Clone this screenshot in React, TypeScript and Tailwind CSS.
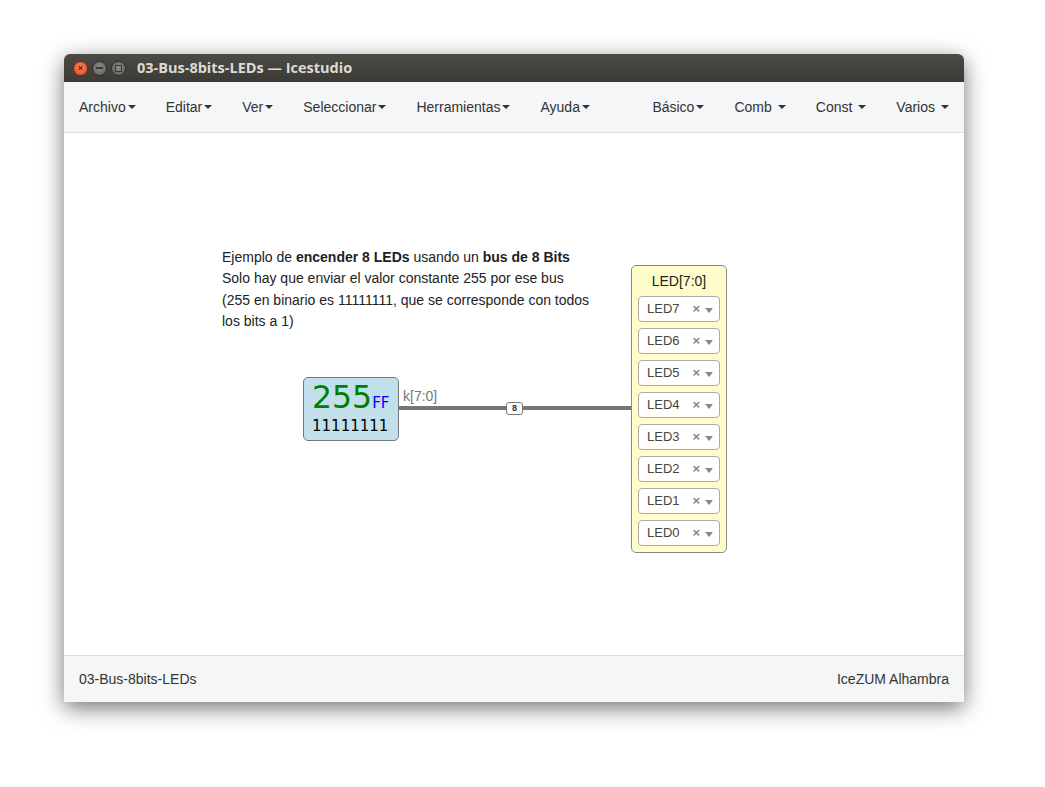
import React from "react";

const menuIzq = ["Archivo", "Editar", "Ver", "Seleccionar", "Herramientas", "Ayuda"];
const menuDer = ["Básico", "Comb", "Const", "Varios"];
const leds = ["LED7", "LED6", "LED5", "LED4", "LED3", "LED2", "LED1", "LED0"];

function Caret() {
  return (
    <span className="inline-block ml-[2px] w-0 h-0 border-t-[4px] border-t-[#333] border-x-[4px] border-x-transparent align-middle" />
  );
}

function MenuItem({ label, espacio }: { label: string; espacio?: boolean }) {
  return (
    <div className="px-[15px] flex items-center text-[14px] text-[#333]">
      <span>{label}</span>
      {espacio && <span className="w-[4px]" />}
      <Caret />
    </div>
  );
}

function BotonVentana({ tipo }: { tipo: "cerrar" | "min" | "max" }) {
  if (tipo === "cerrar") {
    return (
      <div className="w-[15px] h-[15px] rounded-full bg-[radial-gradient(circle_at_50%_40%,#f78a5f,#e0461c)] border border-[#7a2a12] flex items-center justify-center text-[9px] leading-none text-[#5a1a08] font-bold">
        ×
      </div>
    );
  }
  return (
    <div className="w-[15px] h-[15px] rounded-full bg-[radial-gradient(circle_at_50%_40%,#8c8b86,#5d5c58)] border border-[#2f2e2b] flex items-center justify-center">
      {tipo === "min" ? (
        <span className="block w-[7px] h-[2px] bg-[#3a3935]" />
      ) : (
        <span className="block w-[7px] h-[7px] border-[1.5px] border-[#3a3935]" />
      )}
    </div>
  );
}

function SelectLed({ nombre }: { nombre: string }) {
  return (
    <div className="h-[26px] bg-white border border-[#aaa] rounded-[4px] flex items-center pl-[8px] pr-[6px] text-[13px] text-[#444]">
      <span className="flex-1">{nombre}</span>
      <span className="text-[13px] font-bold text-[#888] mr-[5px]">×</span>
      <span className="w-0 h-0 border-t-[5px] border-t-[#888] border-x-[4px] border-x-transparent mt-[2px]" />
    </div>
  );
}

export default function App() {
  return (
    <div className="w-[1045px] h-[787px] bg-white pt-[54px] pl-[64px] font-['Liberation_Sans',Arial,sans-serif]">
      <div className="w-[900px] h-[648px] flex flex-col rounded-t-[6px] overflow-hidden shadow-[0_6px_22px_rgba(0,0,0,0.55)]">
        {/* Barra de título */}
        <div className="h-[28px] bg-[linear-gradient(#4b4a45,#3c3b37)] flex items-center pl-[9px] gap-[4px]">
          <BotonVentana tipo="cerrar" />
          <BotonVentana tipo="min" />
          <BotonVentana tipo="max" />
          <span className="ml-[7px] text-[14.5px] font-bold text-[#dfdbd2] font-['Open_Sans',sans-serif]">
            03-Bus-8bits-LEDs — Icestudio
          </span>
        </div>

        {/* Menú */}
        <div className="h-[51px] bg-[#f5f6f7] border-b border-[#ddd] flex items-stretch justify-between">
          <div className="flex">
            {menuIzq.map((m) => (
              <MenuItem key={m} label={m} />
            ))}
          </div>
          <div className="flex">
            {menuDer.map((m) => (
              <MenuItem key={m} label={m} espacio={m !== "Básico"} />
            ))}
          </div>
        </div>

        {/* Canvas */}
        <div className="relative flex-1 bg-white">
          <div className="absolute left-[158px] top-[114px] text-[14px] leading-[21.3px] text-[#222]">
            Ejemplo de <b>encender 8 LEDs</b> usando un <b>bus de 8 Bits</b>
            <br />
            Solo hay que enviar el valor constante 255 por ese bus
            <br />
            (255 en binario es 11111111, que se corresponde con todos
            <br />
            los bits a 1)
          </div>

          {/* Bloque constante */}
          <div className="absolute left-[239px] top-[244px] w-[96px] h-[64px] bg-[#c2e0eb] border border-[#777] rounded-[5px] flex flex-col pl-[8px] pt-[4px] font-['DejaVu_Sans',sans-serif]">
            <div className="flex items-baseline">
              <span className="text-[31.5px] leading-none text-[#008000]">255</span>
              <span className="text-[15px] leading-none text-[#0000ff]">FF</span>
            </div>
            <span className="mt-[5px] text-[15px] leading-none text-black">11111111</span>
          </div>

          <span className="absolute left-[339px] top-[253px] text-[14px] text-[#777]">k[7:0]</span>

          {/* Cable */}
          <div className="absolute left-[335px] top-[273px] w-[233px] h-[4px] bg-[#777]" />
          <div className="absolute left-[442px] top-[269px] w-[17px] h-[13px] bg-white border border-[#777] rounded-[3px] flex items-center justify-center text-[9px] font-bold text-[#333] leading-none">
            8
          </div>

          {/* Bloque LEDs */}
          <div className="absolute left-[567px] top-[132px] w-[96px] h-[288px] bg-[#fffccc] border border-[#888] rounded-[5px] px-[6px] pb-[6px] flex flex-col">
            <div className="h-[30px] flex items-center justify-center text-[14px] text-[#222]">LED[7:0]</div>
            <div className="flex flex-col gap-[6px]">
              {leds.map((l) => (
                <SelectLed key={l} nombre={l} />
              ))}
            </div>
          </div>
        </div>

        {/* Pie */}
        <div className="h-[47px] bg-[#f5f6f7] border-t border-[#ddd] flex items-center justify-between px-[15px] text-[14px] text-[#333]">
          <span>03-Bus-8bits-LEDs</span>
          <span>IceZUM Alhambra</span>
        </div>
      </div>
    </div>
  );
}
